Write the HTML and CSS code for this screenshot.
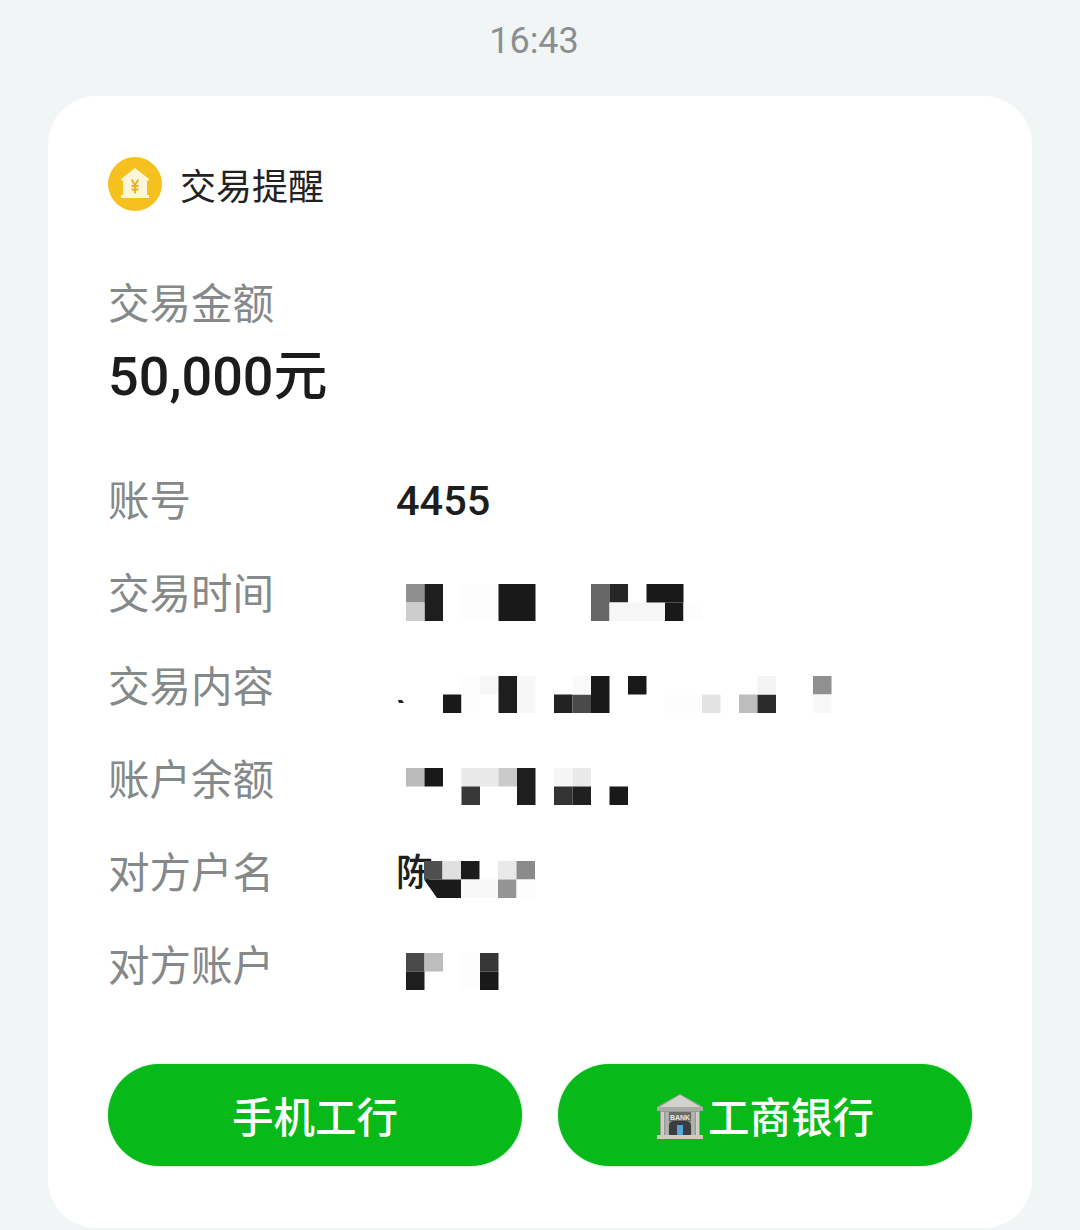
FILE: index.html

```html
<!DOCTYPE html>
<html lang="zh-CN">
<head>
<meta charset="UTF-8">
<title>交易提醒</title>
<link rel="stylesheet" href="styles.css">
</head>
<body>
<div class="time">16:43</div>
<div class="card">
  <div class="head">
    <svg class="logo" viewBox="0 0 54 54">
      <circle cx="27" cy="27" r="27" fill="#f6c01f"/>
      <path d="M27 11 41.500 22.500 39 24V38H41V41H13V38H15V24L12.500 22.500Z" fill="#fdf6d8"/>
      <path d="M23.500 22.500 27 28 30.500 22.500M27 28V36.500M23.500 29H30.500M23.500 32.500H30.500" fill="none" stroke="#e8b020" stroke-width="1.800"/>
    </svg>
    <span class="head-title">交易提醒</span>
  </div>
  <div class="label">交易金额</div>
  <div class="amount">50,000元</div>
  <div class="rows">
    <div class="row">
      <span class="label">账号</span>
      <span class="value">4455</span>
    </div>
    <div class="row">
      <span class="label">交易时间</span>
      <svg class="mosaic" width="300" height="37" viewBox="0 0 300 37">
        <rect x="0" y="0" width="18.500" height="18.500" fill="#8f8f8f"/>
        <rect x="18.500" y="0" width="18.500" height="37" fill="#1e1e1e"/>
        <rect x="0" y="18.500" width="18.500" height="18.500" fill="#cdcdcd"/>
        <rect x="55.500" y="0" width="37" height="37" fill="#fdfdfd"/>
        <rect x="92.500" y="0" width="37" height="37" fill="#191919"/>
        <rect x="185" y="0" width="18.500" height="37" fill="#666"/>
        <rect x="203.500" y="0" width="18.500" height="18.500" fill="#262626"/>
        <rect x="203.500" y="18.500" width="55.500" height="18.500" fill="#f6f6f6"/>
        <rect x="240.500" y="0" width="37" height="18.500" fill="#191919"/>
        <rect x="259" y="18.500" width="18.500" height="18.500" fill="#191919"/>
        <rect x="277.500" y="18.500" width="18.500" height="18.500" fill="#fdfdfd"/>
      </svg>
    </div>
    <div class="row">
      <span class="label">交易内容</span>
      <svg class="mosaic" width="440" height="37" viewBox="0 0 440 37">
        <path d="M-8 24l4 0 2 3-5 0z" fill="#222"/>
        <rect x="37" y="18.500" width="18.500" height="18.500" fill="#191919"/>
        <rect x="55.500" y="0" width="18.500" height="37" fill="#fdfdfd"/>
        <rect x="74" y="0" width="18.500" height="18.500" fill="#f6f6f6"/>
        <rect x="92.500" y="0" width="18.500" height="37" fill="#1e1e1e"/>
        <rect x="111" y="0" width="18.500" height="37" fill="#f7f7f7"/>
        <rect x="148" y="18.500" width="18.500" height="18.500" fill="#222"/>
        <rect x="166.500" y="18.500" width="18.500" height="18.500" fill="#4a4a4a"/>
        <rect x="166.500" y="0" width="18.500" height="18.500" fill="#f9f9f9"/>
        <rect x="185" y="0" width="18.500" height="37" fill="#191919"/>
        <rect x="222" y="0" width="18.500" height="18.500" fill="#191919"/>
        <rect x="259" y="18.500" width="37" height="18.500" fill="#fdfdfd"/>
        <rect x="296" y="18.500" width="18.500" height="18.500" fill="#e3e3e3"/>
        <rect x="333" y="18.500" width="18.500" height="18.500" fill="#bdbdbd"/>
        <rect x="351.500" y="18.500" width="18.500" height="18.500" fill="#2a2a2a"/>
        <rect x="351.500" y="0" width="18.500" height="18.500" fill="#f4f4f4"/>
        <rect x="407" y="0" width="18.500" height="18.500" fill="#909090"/>
        <rect x="407" y="18.500" width="18.500" height="18.500" fill="#f8f8f8"/>
      </svg>
    </div>
    <div class="row">
      <span class="label">账户余额</span>
      <svg class="mosaic" width="300" height="37" viewBox="0 0 300 37">
        <rect x="0" y="0" width="18.500" height="18.500" fill="#bbb"/>
        <rect x="18.500" y="0" width="18.500" height="18.500" fill="#191919"/>
        <rect x="55.500" y="0" width="37" height="18.500" fill="#e9e9e9"/>
        <rect x="92.500" y="0" width="18.500" height="18.500" fill="#cacaca"/>
        <rect x="111" y="0" width="18.500" height="37" fill="#1e1e1e"/>
        <rect x="55.500" y="18.500" width="18.500" height="18.500" fill="#383838"/>
        <rect x="148" y="0" width="18.500" height="18.500" fill="#f5f5f5"/>
        <rect x="166.500" y="0" width="18.500" height="18.500" fill="#e9e9e9"/>
        <rect x="148" y="18.500" width="18.500" height="18.500" fill="#333"/>
        <rect x="166.500" y="18.500" width="18.500" height="18.500" fill="#202020"/>
        <rect x="203.500" y="18.500" width="18.500" height="18.500" fill="#191919"/>
      </svg>
    </div>
    <div class="row">
      <span class="label">对方户名</span>
      <span class="value value-name">陈</span>
      <svg class="mosaic mosaic-after" width="150" height="37" viewBox="0 0 150 37">
        <rect x="0" y="0" width="18.500" height="18.500" fill="#4f4f4f"/>
        <rect x="18.500" y="0" width="18.500" height="18.500" fill="#e0e0e0"/>
        <rect x="37" y="0" width="18.500" height="18.500" fill="#1c1c1c"/>
        <path d="M0 18.500H37V37H13Z" fill="#1a1a1a"/>
        <rect x="37" y="18.500" width="37" height="18.500" fill="#f8f8f8"/>
        <rect x="74" y="0" width="18.500" height="18.500" fill="#e9e9e9"/>
        <rect x="92.500" y="0" width="18.500" height="18.500" fill="#8a8a8a"/>
        <rect x="74" y="18.500" width="18.500" height="18.500" fill="#949494"/>
        <rect x="92.500" y="18.500" width="18.500" height="18.500" fill="#fdfdfd"/>
      </svg>
    </div>
    <div class="row">
      <span class="label">对方账户</span>
      <svg class="mosaic" width="120" height="37" viewBox="0 0 120 37">
        <rect x="0" y="0" width="18.500" height="18.500" fill="#4a4a4a"/>
        <rect x="18.500" y="0" width="18.500" height="18.500" fill="#bdbdbd"/>
        <rect x="0" y="18.500" width="18.500" height="18.500" fill="#1e1e1e"/>
        <rect x="55.500" y="0" width="18.500" height="37" fill="#fdfdfd"/>
        <rect x="74" y="0" width="18.500" height="18.500" fill="#363636"/>
        <rect x="74" y="18.500" width="18.500" height="18.500" fill="#191919"/>
      </svg>
    </div>
  </div>
  <div class="btns">
    <div class="btn">手机工行</div>
    <div class="btn">
      <svg class="bank" viewBox="0 0 48 46">
        <path d="M24 0 47 13V17H1V13Z" fill="#a9aaa5"/>
        <path d="M24 1 44 13H4Z" fill="#d3d3cd"/>
        <rect x="4" y="17" width="40" height="24" fill="#9a9a95"/>
        <rect x="5" y="18" width="3" height="23" fill="#cfcfc9"/>
        <rect x="9.500" y="18" width="3" height="23" fill="#b5b5af"/>
        <rect x="35.500" y="18" width="3" height="23" fill="#b5b5af"/>
        <rect x="40" y="18" width="3" height="23" fill="#cfcfc9"/>
        <rect x="13" y="18" width="22" height="9" fill="#6c6c66"/>
        <text class="bank-text" x="24" y="25.500" text-anchor="middle">BANK</text>
        <path d="M13 41V32Q13 27 18 27H30Q35 27 35 32V41Z" fill="#3c3d40"/>
        <rect x="21" y="31" width="6" height="10" fill="#52a6dc"/>
        <rect x="1" y="41" width="46" height="4" fill="#cdcdc7"/>
      </svg>工商银行
    </div>
  </div>
</div>
</body>
</html>
```

FILE: styles.css

```css
* { box-sizing: border-box; }
html, body { margin: 0; height: 100%; }
body { background: #f1f5f6; font-family: "Noto Sans CJK SC", "Noto Sans", sans-serif; overflow: hidden; }

.time { height: 96px; padding-top: 18px; padding-right: 12px; text-align: center; font-family: Roboto, sans-serif;
        font-size: 36px; line-height: 46px; color: #8b8f90; }

.card { width: 984px; height: 1132px; margin-left: 48px; padding: 60px 60px 0; background: #fff; border-radius: 48px; }

.head { display: flex; align-items: center; gap: 18px; height: 56px; }
.logo { width: 54px; height: 54px; }
.head-title { font-size: 36px; line-height: 54px; color: #222; }

.label { display: block; width: 288px; flex: none; font-size: 41.500px; line-height: 56px; color: #85898a; }
.head + .label { margin-top: 61px; }
.amount { margin-top: 16px; font-family: Roboto, "Noto Sans CJK SC", sans-serif; font-size: 54px; font-weight: 500;
          line-height: 64px; color: #1c1c1c; }

.rows { margin-top: 42px; }
.row { display: flex; align-items: center; height: 93px; }
.value { padding-top: 6px; font-family: Roboto, "Noto Sans CJK SC", sans-serif; font-size: 41.500px; font-weight: 500; color: #1e1e1e; }
.value-name { padding-top: 0; font-size: 37px; }
.mosaic { display: block; flex: none; margin-left: 10px; overflow: visible; }
.row:nth-child(2) .mosaic { margin-top: 24px; }
.row:nth-child(3) .mosaic { margin-top: 22px; }
.row:nth-child(4) .mosaic { margin-top: 20px; }
.row:nth-child(5) .mosaic { margin-top: 20px; }
.row:nth-child(6) .mosaic { margin-top: 18px; }
.mosaic-after { margin-left: -9.500px; }

.btns { display: flex; gap: 36px; margin-top: 55px; }
.btn { display: flex; align-items: center; justify-content: center; width: 414px; height: 102px; border-radius: 51px;
       background: #07b919; color: #fff; font-size: 41.500px; font-weight: 500; box-shadow: 0 0 2px #9be8a3; }
.bank { width: 48px; height: 46px; margin: 4px 4px 0 0; }
.bank-text { font-family: "Liberation Sans", sans-serif; font-size: 7px; font-weight: 700; fill: #e8e8e4; }
```
